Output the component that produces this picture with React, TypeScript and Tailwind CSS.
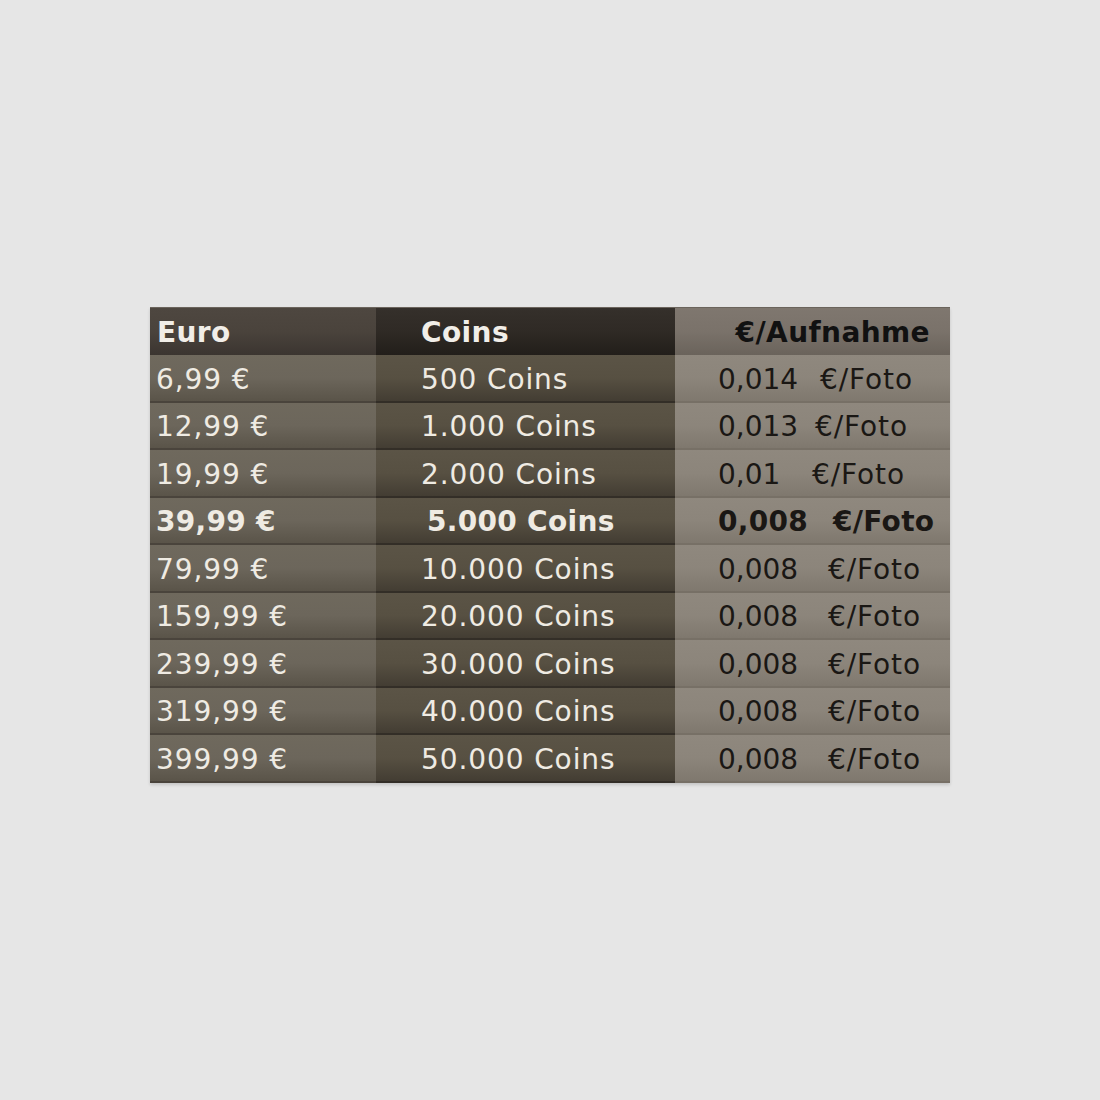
const rows = [
  { euro: "6,99 €", coins: "500 Coins", price: "0,014", w: "w-[102px]" },
  { euro: "12,99 €", coins: "1.000 Coins", price: "0,013", w: "w-[97px]" },
  { euro: "19,99 €", coins: "2.000 Coins", price: "0,01", w: "w-[94px]" },
  { euro: "39,99 €", coins: "5.000 Coins", price: "0,008", w: "w-[115px]", bold: true },
  { euro: "79,99 €", coins: "10.000 Coins", price: "0,008", w: "w-[110px]" },
  { euro: "159,99 €", coins: "20.000 Coins", price: "0,008", w: "w-[110px]" },
  { euro: "239,99 €", coins: "30.000 Coins", price: "0,008", w: "w-[110px]" },
  { euro: "319,99 €", coins: "40.000 Coins", price: "0,008", w: "w-[110px]" },
  { euro: "399,99 €", coins: "50.000 Coins", price: "0,008", w: "w-[110px]" },
];

export default function App() {
  return (
    <div className="h-[1100px] w-full bg-[#e6e6e6] pt-[307px] font-['DejaVu_Sans',sans-serif]">
      <div className="mx-auto w-[800px] shadow-[0_2px_3px_rgba(0,0,0,0.15)]">
        <div className="grid h-[48px] grid-cols-[226px_299px_275px] border-t border-[#6b645c] text-[28px] font-bold leading-none tracking-[0.4px]">
          <div className="flex items-center bg-linear-to-b from-[#4e4740] via-[#4a433c] to-[#3b3530] pl-[7px] pt-[3px] text-[#f1eee8]">
            Euro
          </div>
          <div className="flex items-center bg-linear-to-b from-[#35302b] via-[#2f2a25] to-[#221e1a] pl-[45px] pt-[3px] text-[#f1eee8]">
            Coins
          </div>
          <div className="flex items-center justify-end bg-linear-to-b from-[#7f776f] via-[#7a726a] to-[#6a635b] pr-[20px] pt-[3px] text-[#111]">
            €/Aufnahme
          </div>
        </div>
        {rows.map((r) => (
          <div
            key={r.euro}
            className={`grid h-[47.5px] grid-cols-[226px_299px_275px] leading-none ${
              r.bold ? "text-[28px] font-bold tracking-[0.3px]" : "text-[28px] font-normal tracking-[0.9px]"
            }`}
          >
            <div className="flex items-center border-b-2 border-[#4a443c] bg-linear-to-b from-[#6f695d] via-[#6c665b] to-[#5a5449] pl-[6px] pt-[4px] text-[#efebe3]">
              {r.euro}
            </div>
            <div
              className={`flex items-center border-b-2 border-[#332e27] bg-linear-to-b from-[#5b5446] via-[#575042] to-[#433d33] pt-[4px] text-[#efebe3] ${
                r.bold ? "pl-[51px]" : "pl-[45px]"
              }`}
            >
              {r.coins}
            </div>
            <div className="flex items-center border-b-2 border-[#777066] bg-linear-to-b from-[#8f887e] via-[#8c857b] to-[#7f786e] pl-[43px] pt-[4px] text-[#1a1714]">
              <span className={`${r.w} ${r.bold ? "" : "tracking-normal"}`}>{r.price}</span>
              <span>€/Foto</span>
            </div>
          </div>
        ))}
      </div>
    </div>
  );
}
